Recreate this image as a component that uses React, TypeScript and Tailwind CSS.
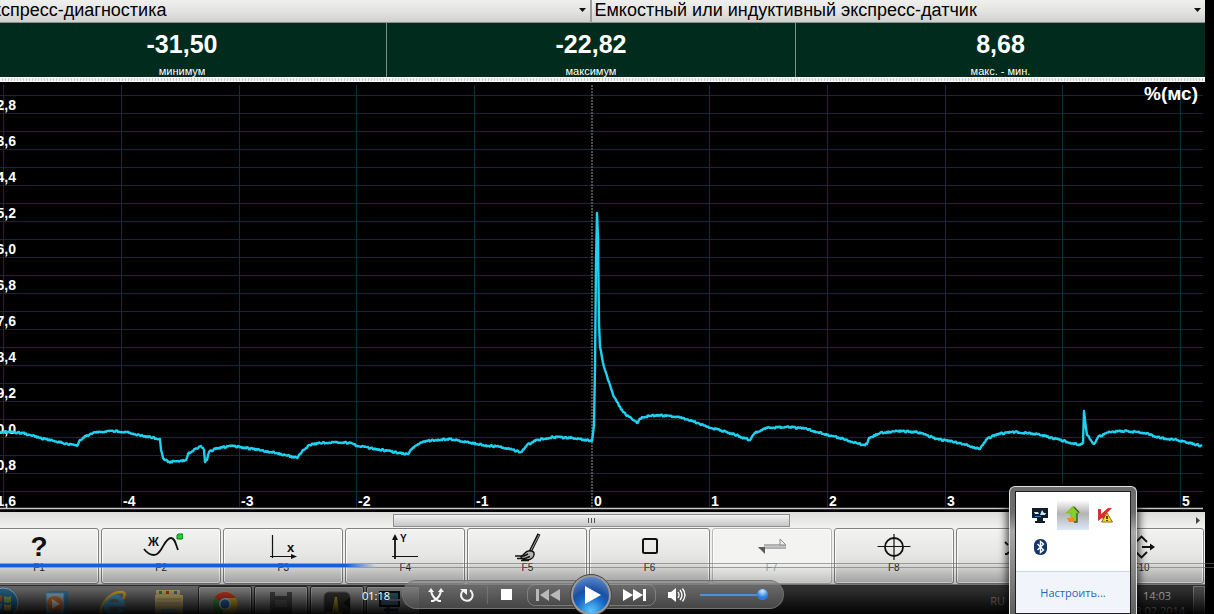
import type { ReactNode } from "react";

type Stat = {
  value: string;
  caption: string;
};

type FunctionKey = {
  label: string;
  icon: ReactNode;
  disabled?: boolean;
};

type TaskItem = {
  name: string;
  icon: ReactNode;
  open?: boolean;
};

const stats: Stat[] = [
  { value: "-31,50", caption: "минимум" },
  { value: "-22,82", caption: "максимум" },
  { value: "8,68", caption: "макс. - мин." },
];

const rows = Array.from({ length: 23 }, (_, i) => 13.5 + i * 18);

const yLabels = ["-22,8", "-23,6", "-24,4", "-25,2", "-26,0", "-26,8", "-27,6", "-28,4", "-29,2", "-30,0", "-30,8", "-31,6"];

const columns = [
  { x: 3, label: "" },
  { x: 121, label: "-4" },
  { x: 239, label: "-3" },
  { x: 356, label: "-2" },
  { x: 474, label: "-1" },
  { x: 592, label: "0" },
  { x: 709, label: "1" },
  { x: 827, label: "2" },
  { x: 945, label: "3" },
  { x: 1062, label: "4" },
  { x: 1180, label: "5" },
];

const samples: [number, number][] = [
  [-2, 350], [8, 350], [23, 351], [40, 356], [63, 361], [77, 364], [80, 358], [86, 354], [93, 351], [113, 349], [127, 350],
  [143, 354], [160, 357], [161, 368], [163, 376], [168, 380], [180, 379], [186, 378], [188, 372], [195, 367],
  [201, 364], [204, 368], [205, 380], [207, 378], [209, 370], [217, 366], [233, 364], [253, 367], [277, 371],
  [297, 376], [300, 372], [303, 368], [310, 363], [320, 361], [337, 360], [350, 361], [357, 364], [377, 367],
  [400, 371], [408, 372], [412, 367], [420, 361], [433, 358], [450, 357], [467, 360], [483, 363], [500, 365],
  [521, 370], [527, 363], [537, 358], [553, 355], [573, 356], [592, 359], [594, 343], [595, 285], [596, 181],
  [597, 131], [598, 155], [599, 241], [600, 265], [604, 285], [608, 298], [614, 315], [623, 330], [633, 338],
  [637, 341], [642, 335], [657, 333], [677, 335], [693, 339], [707, 345], [727, 350], [750, 358], [755, 351],
  [767, 346], [790, 345], [807, 347], [817, 350], [840, 356], [863, 363], [867, 362], [869, 356], [880, 351],
  [897, 349], [917, 350], [937, 357], [960, 361], [980, 367], [987, 357], [997, 352], [1015, 350], [1037, 352],
  [1060, 358], [1080, 363], [1083, 361], [1084, 329], [1085, 338], [1087, 353], [1094, 362], [1098, 355],
  [1110, 350], [1127, 349], [1147, 351], [1155, 355], [1177, 358], [1202, 364],
];

// adds the measuring noise between the samples
function buildTrace(points: [number, number][]) {
  const out: string[] = [];
  points.forEach(([x, y], i) => {
    out.push(`${x},${y}`);
    const next = points[i + 1];
    if (!next) return;
    for (let px = x + 1; px < next[0]; px += 1) {
      const t = (px - x) / (next[0] - x);
      const noise = Math.sin(px * px * 1.7) * 0.8;
      out.push(`${px},${(y + (next[1] - y) * t + noise).toFixed(1)}`);
    }
  });
  return out.join(" ");
}

const trace = buildTrace(samples);

function Selector({ label, value, className, selectClassName }: {
  label: string;
  value: string;
  className: string;
  selectClassName: string;
}) {
  return (
    <div className={`relative h-[23px] overflow-hidden border-b border-[#8d918f] bg-linear-to-b from-[#efefee] via-[#e4e4e3] to-[#cfcfce] ${className}`}>
      <select
        aria-label={label}
        className={`block h-[20px] appearance-none bg-transparent text-[18px] leading-[20px] text-black outline-none ${selectClassName}`}
      >
        <option>{value}</option>
      </select>
      <svg className="pointer-events-none absolute top-[8px] right-[4px]" width="7" height="4" viewBox="0 0 7 4">
        <path d="M0 0h7L3.5 4z" fill="#111" />
      </svg>
    </div>
  );
}

function Chart() {
  return (
    <svg viewBox="0 0 1205 430" className="block h-auto w-full bg-black font-bold">
      <g stroke="#0c2c3c" strokeWidth="1">
        {rows.map((y) => (
          <line key={y} x1="0" x2="1203" y1={y} y2={y} />
        ))}
      </g>
      <g stroke="#0c2f40" strokeWidth="1">
        {columns.map(({ x }) => (
          <line key={x} x1={x + 0.5} x2={x + 0.5} y1="3" y2="425" />
        ))}
      </g>
      <line x1="592" x2="592" y1="3" y2="425" stroke="#000" strokeWidth="2" />
      <line x1="592" x2="592" y1="3" y2="425" stroke="#a39a98" strokeDasharray="2 1" />
      <g fill="#fff" fontSize="14">
        {yLabels.map((label, i) => (
          <text key={label} x="16" y={28 + i * 36} textAnchor="end">{label}</text>
        ))}
        {columns.map(({ x, label }) => (
          <text key={x} x={x + 2} y="424">{label}</text>
        ))}
      </g>
      <polyline points={trace} fill="none" stroke="#1fd0f0" strokeWidth="2.4" strokeLinejoin="round" />
      <text x="1198" y="18" textAnchor="end" fill="#fff" fontSize="19">%(мс)</text>
      <line x1="0" x2="1203" y1="426.5" y2="426.5" stroke="#c9c6c8" strokeWidth="1.4" />
    </svg>
  );
}

function KeyIcon({ children }: { children?: ReactNode }) {
  return (
    <svg width="44" height="32" viewBox="0 0 44 32" fill="none" stroke="#111" strokeWidth="1.6" className="block">
      {children}
    </svg>
  );
}

const functionKeys: FunctionKey[] = [
  {
    label: "F1",
    icon: <span className="block h-[32px] text-[28px] leading-[34px] font-bold">?</span>,
  },
  {
    label: "F2",
    icon: (
      <KeyIcon>
        <text x="9" y="16" fontSize="12" fontWeight="bold" fill="#111" stroke="none">Ж</text>
        <path d="M5 19c3 4 7 6 10 6 8 0 10-17 17-17 4 0 5 7 7 12" strokeWidth="1.8" />
        <path d="M38 5l1-1h5v4l-1 1h-5z" fill="#19d82b" stroke="#0a7d16" strokeWidth="1" />
      </KeyIcon>
    ),
  },
  {
    label: "F3",
    icon: (
      <KeyIcon>
        <path d="M11.5 5v23M9 26.5h22" strokeWidth="1.2" />
        <path d="M30 24l6 2.5-6 2.5z" fill="#111" stroke="none" />
        <text x="26" y="22" fontSize="13" fontWeight="bold" fill="#111" stroke="none">x</text>
      </KeyIcon>
    ),
  },
  {
    label: "F4",
    icon: (
      <KeyIcon>
        <path d="M12 8v21" strokeWidth="1.8" />
        <path d="M9 26.5h26" strokeWidth="1" />
        <path d="M12 4l3 6H9z" fill="#111" stroke="none" />
        <text x="17" y="12" fontSize="10" fontWeight="bold" fill="#111" stroke="none">Y</text>
      </KeyIcon>
    ),
  },
  {
    label: "F5",
    icon: (
      <KeyIcon>
        <path d="M34 4l-9 18" strokeWidth="3.2" />
        <path d="M34 5l-9 17" stroke="#999" strokeWidth="1" />
        <path d="M20 23c2-3 8-3 9 0s-2 7-7 7c-4 0-6-2-6-3z" fill="#b5b5b5" strokeWidth="1.4" />
        <path d="M10 26h9l4-2M12 28.5h8l5-2M16 30.5h8" strokeWidth="1.4" />
      </KeyIcon>
    ),
  },
  {
    label: "F6",
    icon: (
      <KeyIcon>
        <rect x="15" y="9" width="14" height="14" rx="1.5" strokeWidth="2" />
      </KeyIcon>
    ),
  },
  {
    label: "F7",
    disabled: true,
    icon: (
      <KeyIcon>
        <path d="M14 15h22M9 18h27" stroke="#6c6c6c" strokeWidth="1.2" />
        <path d="M14 16.5h22" stroke="#c4c4c4" strokeWidth="1.6" />
        <path d="M30 9l6 6h-6z" fill="#eee" stroke="#8a8a8a" strokeWidth="1" />
        <path d="M8 17h7v7z" fill="#5a5a5a" stroke="none" />
      </KeyIcon>
    ),
  },
  {
    label: "F8",
    icon: (
      <KeyIcon>
        <circle cx="22" cy="17" r="9" strokeWidth="1.8" />
        <path d="M5.5 16.5h33M22 4v26" strokeWidth="1.2" />
      </KeyIcon>
    ),
  },
  {
    label: "F9",
    icon: (
      <KeyIcon>
        <path d="M11 12l3 3M11 24h2l2-2" strokeWidth="1.8" />
      </KeyIcon>
    ),
  },
  {
    label: "F10",
    icon: (
      <KeyIcon>
        <path d="M23 17h10M17 12l5.5-5.5L28 12M17 22l5.5 5.5L28 22M16 13l-4 4 4 4" strokeWidth="1.8" />
        <path d="M31 13.5l5 3.5-5 3.5z" fill="#111" stroke="none" />
      </KeyIcon>
    ),
  },
];

function FunctionButton({ label, icon, disabled }: FunctionKey) {
  return (
    <button
      type="button"
      disabled={disabled}
      className={`flex h-[56px] flex-col items-center rounded-[3px] border pt-[1px] shadow-[inset_0_0_0_1px_#fbfbfb] ${
        disabled
          ? "border-[#b9b9b9] bg-[#f3f3f2] text-[#a5a5a5]"
          : "border-[#808080] bg-linear-to-b from-[#f3f3f1] from-0% via-[#e6e6e4] via-48% to-[#cbcbcb] text-[#111]"
      }`}
    >
      {icon}
      <span className={`text-[10px] leading-[12px] ${disabled ? "text-[#a5a5a5]" : "text-[#222]"}`}>{label}</span>
    </button>
  );
}

const taskItems: TaskItem[] = [
  {
    name: "Media Player",
    icon: (
      <svg width="26" height="27" viewBox="0 0 26 27">
        <path d="M5 1h19v25H5z" fill="#3a7eab" />
        <path d="M2 3h18v24H2z" fill="#a3cde4" stroke="#4d93bd" />
        <circle cx="11" cy="14" r="8" fill="#e8843a" />
        <path d="M8 9l8 5-8 5z" fill="#fff" />
      </svg>
    ),
  },
  {
    name: "Internet Explorer",
    icon: (
      <svg width="28" height="27" viewBox="0 0 28 27" fill="none">
        <path d="M22.5 19a8.500 8.500 0 1 1 1-4.500H8" stroke="#4fb4ea" strokeWidth="4.500" />
        <path d="M3 26C-2 17 11 1 23 2c4 1 3 4 1 7" stroke="#e8bb3a" strokeWidth="2.500" />
      </svg>
    ),
  },
  {
    name: "Explorer",
    icon: (
      <svg width="30" height="27" viewBox="0 0 30 27">
        <path d="M2 0h24v6H2z" fill="#d8bd74" />
        <path d="M5 1h3v3H5z" fill="#3c8a3c" />
        <path d="M12 1h3v3h-3z" fill="#b4402c" />
        <path d="M20 1h3v3h-3z" fill="#3576b5" />
        <path d="M1 5h28v22H1z" fill="#ecd38a" />
        <path d="M3 9h24M3 13h24" stroke="#c2a962" />
        <path d="M7 19h16v8H7z" fill="#82bcd2" />
      </svg>
    ),
  },
  {
    name: "Chrome",
    open: true,
    icon: (
      <svg width="26" height="26" viewBox="0 0 26 26">
        <circle cx="13" cy="13" r="12.5" fill="#f0c52e" />
        <path d="M13 13L2.2 6.7A12.5 12.5 0 0 1 23.8 7H13z" fill="#dd4333" />
        <path d="M13 13l-3 12.2A12.5 12.5 0 0 1 2.2 6.7z" fill="#45a350" />
        <circle cx="13" cy="13" r="6" fill="#eee" />
        <circle cx="13" cy="13" r="4.5" fill="#2f78ca" />
      </svg>
    ),
  },
  {
    name: "Recorder",
    open: true,
    icon: (
      <svg width="24" height="26" viewBox="0 0 24 26">
        <path d="M1 1h5v4h12V1h5v25H1z" fill="#4c4c4c" />
        <path d="M6 9h12v7H6z" fill="#646464" />
      </svg>
    ),
  },
  {
    name: "Scope",
    open: true,
    icon: (
      <svg width="28" height="27" viewBox="0 0 28 27">
        <rect x="1" y="1" width="26" height="26" rx="5" fill="#3a3936" stroke="#666" />
        <path d="M3 22h7l3-16 2 16h4M13 6v20" fill="none" stroke="#cdb224" strokeWidth="2" />
        <path d="M20 12l7-6v12z" fill="#14171c" />
      </svg>
    ),
  },
  {
    name: "Monitor",
    open: true,
    icon: (
      <svg width="28" height="24" viewBox="0 0 28 24">
        <rect x="1" y="1" width="19" height="14" fill="#3a6482" stroke="#111" strokeWidth="2" />
        <path d="M5 19h14M9 16v6" stroke="#1c3344" strokeWidth="3" />
        <path d="M9 8h12v-3h3l3 3-3 4h-3v-2H9z" fill="#85898c" />
      </svg>
    ),
  },
];

function Taskbar() {
  return (
    <div className="flex h-[29px] items-start overflow-hidden border-t border-[#3a3a3a] bg-linear-to-b from-[#838383] to-[#707070]">
      <button type="button" aria-label="Пуск" className="-ml-[22px] flex w-[50px] shrink-0 justify-center pt-[1px]">
        <svg width="32" height="32" viewBox="0 0 32 32">
          <circle cx="16" cy="16" r="15" fill="#2a78aa" stroke="#a6cfe3" />
          <path d="M8 9q4-2 7 0v6q-3-2-7 0z" fill="#e4703a" />
          <path d="M17 9q4 2 7 0v6q-4 2-7 0z" fill="#97cc4b" />
          <path d="M8 17q4-2 7 0v6q-3-2-7 0z" fill="#5cb6ec" />
          <path d="M17 17q4 2 7 0v6q-4 2-7 0z" fill="#f5cf4a" />
        </svg>
      </button>
      <div className="ml-[2px] flex gap-[2px]">
        {taskItems.map((item) => (
          <button
            key={item.name}
            type="button"
            aria-label={item.name}
            className={`flex h-[40px] w-[54px] shrink-0 justify-center pt-[4px] ${
              item.open ? "rounded-t-[2px] border border-[#2b2b2b] bg-[#a8a8a8]/60 shadow-[inset_0_0_0_1px_#b8b8b8]" : ""
            }`}
          >
            {item.icon}
          </button>
        ))}
      </div>
      <div className="h-[40px] grow bg-[#222]/70" />
      <div className="flex h-[40px] w-[226px] shrink-0 justify-end bg-[#222]/70 font-['Open_Sans',sans-serif] text-[11px] text-[#f2f2f2]">
        <span className="mr-[124px] pt-[7px] leading-[16px] text-[#b0b0b0]">RU</span>
        <div className="mr-[8px] w-[56px] text-center leading-[16px]">
          <p className="pt-[2px]">14:03</p>
          <p className="-mt-px">13.02.2014</p>
        </div>
        <div className="w-[12px] shrink-0 border border-[#999] bg-[#777]/60" />
      </div>
    </div>
  );
}

function Player() {
  return (
    <div className="absolute inset-x-0 bottom-0 h-[51px] bg-linear-to-b from-black/0 via-black/30 via-55% to-black/95">
      <div className="h-[5px] border-y border-[#6b6b6b]/60">
        <div className="h-[3px] w-[31%] bg-linear-to-r from-[#155fd8] from-92% to-[#3f9cff]/0 shadow-[0_0_1px_#cfe4ff]" />
      </div>
      <div className="absolute bottom-[9px] left-[362px] font-['Open_Sans',sans-serif] text-[11px] leading-[18px] text-white">01:18</div>
      <div className="absolute bottom-[5px] left-[402px] flex h-[29px] w-[382px] items-center rounded-full border border-[#777]/70 bg-linear-to-b from-[#8a8a8a]/70 to-[#555]/80 text-white">
        <button type="button" aria-label="Перемешать" className="ml-[25px]">
          <svg width="16" height="16" viewBox="0 0 16 16" fill="none" stroke="#f4f4f4" strokeWidth="2" className="block">
            <path d="M3 14h2c5-2 7-5 8-10M13 14h-2C6 12 4 9 3 4" />
            <path d="M0 5l3-4 3 4zM10 5l3-4 3 4z" fill="#f4f4f4" stroke="none" />
          </svg>
        </button>
        <button type="button" aria-label="Повтор" className="ml-[15px]">
          <svg width="16" height="16" viewBox="0 0 16 16" fill="none" stroke="#f4f4f4" strokeWidth="2" className="block">
            <path d="M11 3.2A5.8 5.8 0 1 1 5 3" />
            <path d="M1 2h7v6z" fill="#f4f4f4" stroke="none" />
          </svg>
        </button>
        <div className="ml-[12px] h-[18px] w-px bg-[#888]/50" />
        <button type="button" aria-label="Стоп" className="ml-[13px] h-[11px] w-[11px] bg-white" />
        <button
          type="button"
          aria-label="Назад"
          className="ml-[15px] flex h-[22px] w-[54px] items-center rounded-l-[8px] border border-[#999]/60 pl-[8px]"
        >
          <svg width="24" height="12" viewBox="0 0 24 12" fill="#b9b9b9" className="block">
            <path d="M0 0h3v12H0zM13 0v12L4 6zM24 0v12l-10-6z" />
          </svg>
        </button>
        <button
          type="button"
          aria-label="Пауза"
          className="relative -ml-[11px] flex h-[42px] w-[42px] shrink-0 items-center justify-center rounded-full border border-[#444] bg-[#9a9a9a] p-[2px]"
        >
          <span className="flex h-full w-full items-center justify-center rounded-full bg-[radial-gradient(circle_at_50%_95%,#5cc8ff_0%,#1465c4_40%,#1c4fa0_55%,#6f9bd8_100%)]">
            <svg width="16" height="18" viewBox="0 0 16 18" className="ml-[4px]">
              <path d="M0 0l16 9-16 9z" fill="#fff" />
            </svg>
          </span>
        </button>
        <button
          type="button"
          aria-label="Вперёд"
          className="-ml-[4px] flex h-[22px] w-[48px] items-center rounded-r-[8px] border border-[#999]/60 pl-[14px]"
        >
          <svg width="24" height="12" viewBox="0 0 24 12" fill="#fff" className="block">
            <path d="M0 0l10 6-10 6zM10 0l10 6-10 6zM20 0h3v12h-3z" />
          </svg>
        </button>
        <button type="button" aria-label="Звук" className="ml-[12px]">
          <svg width="18" height="14" viewBox="0 0 18 14" fill="none" stroke="#fff" className="block">
            <path d="M0 4h3l5-4v14l-5-4H0z" fill="#fff" stroke="none" />
            <path d="M10 4q2 3 0 6M12 2q4 5 0 10M14.5.5q5 6.500 0 13" strokeWidth="1.3" />
          </svg>
        </button>
        <input
          type="range"
          aria-label="Громкость"
          min={0}
          max={100}
          defaultValue={100}
          className="ml-[14px] h-[12px] w-[68px] appearance-none bg-transparent bg-[linear-gradient(#4b8fe0,#4b8fe0)] bg-[length:100%_2px] bg-center bg-no-repeat [&::-webkit-slider-thumb]:h-[11px] [&::-webkit-slider-thumb]:w-[11px] [&::-webkit-slider-thumb]:appearance-none [&::-webkit-slider-thumb]:rounded-full [&::-webkit-slider-thumb]:bg-[radial-gradient(circle_at_50%_20%,#d5ebff,#2a7de0_60%)]"
        />
      </div>
    </div>
  );
}

function TrayPopup() {
  return (
    <div className="absolute right-[77px] bottom-0 h-[128px] w-[128px] rounded-t-[6px] border border-b-0 border-[#e2e2e2] bg-linear-to-b from-[#6d6d6d] from-20% via-[#a8a8a8] via-35% to-[#606060] px-[5px] pt-[4px] shadow-[0_0_8px_2px_rgba(0,0,0,0.75)]">
      <div className="flex h-full flex-col border border-[#1f1f1f] bg-white">
        <div className="grid h-[79px] grid-cols-3 grid-rows-[32px_32px] place-items-center px-[8px] pt-[7px]">
          <svg width="16" height="15" viewBox="0 0 16 15">
            <path d="M0 0h16v10H0zM5 10h6v3h2v2H3v-2h2z" fill="#111c2c" />
            <path d="M2 4h4l1 2H3zM8 7l2-5 2 3h2l-1 2z" fill="#cbe3f7" />
            <path d="M3 8.500h6" stroke="#3e7fc0" />
          </svg>
          <div className="flex h-[30px] w-[32px] items-center justify-center bg-linear-to-b from-white via-[#b4b4b4] via-45% to-[#dbe9fb]">
            <svg width="16" height="18" viewBox="0 0 16 18">
              <path d="M8 0l7 7h-3v8H6V7H1z" fill="#86d022" stroke="#7cb53a" strokeWidth=".6" />
              <path d="M9 1l5 5.500M12 7v9H9" fill="none" stroke="#3e5530" strokeWidth="1.3" />
              <path d="M2 12h7v4H4z" fill="#ef8a1d" />
            </svg>
          </div>
          <svg width="15" height="15" viewBox="0 0 15 15">
            <path d="M0 1h3v5l7-6h4L7 7l2 4-3 1-2-2-4 3z" fill="#d82f2f" />
            <path d="M9 5l5.500 9h-11z" fill="#f6d62c" stroke="#8d7210" />
            <path d="M9 8v3M9 12v1" stroke="#111" strokeWidth="1.4" />
          </svg>
          <svg width="13" height="16" viewBox="0 0 13 16">
            <rect width="13" height="16" rx="6" fill="#12356c" />
            <path d="M3.5 5l6 6-3 2.5v-11l3 2.5-6 6" fill="none" stroke="#fff" strokeWidth="1.4" />
          </svg>
        </div>
        <div className="flex h-[42px] items-center justify-center border-t border-[#ccd9ea] bg-[#f1f5fb]">
          <a href="#customize" className="font-['Open_Sans',sans-serif] text-[11px] leading-[16px] text-[#1b66c4]">Настроить...</a>
        </div>
      </div>
    </div>
  );
}

export default function App() {
  return (
    <div className="relative overflow-hidden bg-black font-['Liberation_Sans',Arial,sans-serif]">
      <div className="mr-[9px]">
        <div className="flex gap-[2px] bg-[#9a9d9b]">
          <Selector
            label="Режим"
            value="Экспресс-диагностика"
            className="w-[49%]"
            selectClassName="-ml-[20px] w-full"
          />
          <Selector
            label="Датчик"
            value="Емкостный или индуктивный экспресс-датчик"
            className="grow"
            selectClassName="w-full pl-[2px]"
          />
        </div>

        <div className="overflow-hidden bg-[#002b1d]">
          <div className="-ml-[22px] grid h-[54px] grid-cols-3 divide-x divide-[#7d918a]">
            {stats.map((stat) => (
              <div key={stat.caption} className="pt-[5px] text-center text-white">
                <p className="text-[25px] leading-[32px] font-bold">{stat.value}</p>
                <p className="mt-[5px] text-[11px] leading-[12px]">{stat.caption}</p>
              </div>
            ))}
          </div>
        </div>
        <div className="h-[5px] border-y border-white bg-[repeating-linear-gradient(90deg,#f4f4f4_0px,#f4f4f4_2px,#c4cac7_2px,#c4cac7_3px)]" />

        <Chart />

        <div className="overflow-hidden bg-[#efefed]">
          <div className="relative flex h-[16px] items-end bg-linear-to-b from-[#dcdcdb] to-[#f2f2f1] pb-[1px]">
            <div className="ml-[32.6%] flex h-[13px] w-[33%] items-center justify-center gap-[2px] border border-[#8f8f8f] bg-linear-to-b from-[#f3f3f3] to-[#c6c6c6]">
              <i className="h-[5px] w-px bg-[#555]" />
              <i className="h-[5px] w-px bg-[#555]" />
              <i className="h-[5px] w-px bg-[#555]" />
            </div>
            <svg className="absolute top-[5px] right-[5px]" width="4" height="7" viewBox="0 0 4 7">
              <path d="M0 0l4 3.5L0 7z" fill="#444" />
            </svg>
          </div>
          <div className="mr-px -ml-[21px] grid grid-cols-[repeat(9,120fr)_126fr] gap-[2px]">
            {functionKeys.map((key) => (
              <FunctionButton key={key.label} {...key} />
            ))}
          </div>
          <div className="h-px bg-[#999]" />
        </div>

        <Taskbar />
      </div>

      <Player />
      <TrayPopup />
    </div>
  );
}
